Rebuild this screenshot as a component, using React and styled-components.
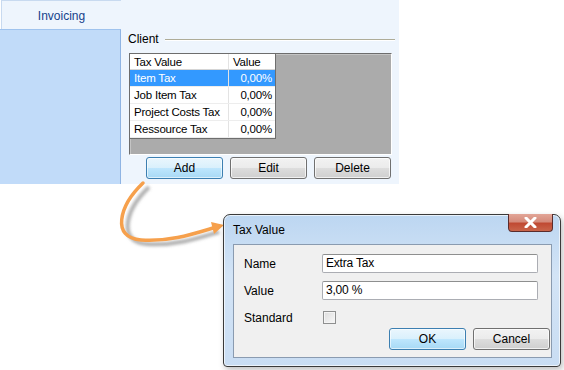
import React from "react";
import styled, { createGlobalStyle } from "styled-components";

const GlobalStyle = createGlobalStyle`
  body {
    margin: 0;
    background: #ffffff;
    font-family: "Liberation Sans", Arial, sans-serif;
    font-size: 11px;
    color: #000;
  }
`;

const taxes = [
  { name: "Item Tax", value: "0,00%" },
  { name: "Job Item Tax", value: "0,00%" },
  { name: "Project Costs Tax", value: "0,00%" },
  { name: "Ressource Tax", value: "0,00%" },
];

const Stage = styled.div`
  position: relative;
  width: 564px;
  height: 370px;
  overflow: hidden;
`;

const Panel = styled.div`
  display: grid;
  grid-template-columns: 121px 278px;
  width: 399px;
  height: 184px;
`;

const SideBar = styled.div`
  display: flex;
  flex-direction: column;
`;

const Tab = styled.div`
  height: 29px;
  box-sizing: border-box;
  display: flex;
  align-items: center;
  justify-content: center;
  padding-top: 2px;
  margin-left: 1px;
  background: #eef5fd;
  border-top: 1px solid #c8daf0;
  border-left: 1px solid #c8daf0;
  color: #15428b;
  font-size: 12px;
`;

const SideFill = styled.div`
  flex: 1;
  background: #c1dbf9;
  border-top: 1px solid #9fc3ee;
  border-right: 1px solid #8fb4e3;
`;

const Content = styled.div`
  background: #eef5fd;
  padding: 32px 7px 0 8px;
  display: flex;
  flex-direction: column;
`;

const Legend = styled.div`
  display: flex;
  align-items: center;
  gap: 6px;
  height: 14px;
  margin-left: -1px;
  margin-right: -3px;
  font-size: 12px;
`;

const Rule = styled.div`
  flex: 1;
  height: 1px;
  background: #aeac98;
  box-shadow: 0 1px 0 #ffffff;
`;

const ListBox = styled.div`
  margin-top: 7px;
  height: 102px;
  box-sizing: border-box;
  background: #ababab;
  border: 1px solid;
  border-color: #6d6d6d #ffffff #ffffff #6d6d6d;
  box-shadow: inset 1px 1px 0 #c4c4c4;
`;

const Table = styled.div`
  width: 146px;
  background: #ffffff;
  border-right: 1px solid #6e6e6e;
  border-bottom: 1px solid #6e6e6e;
  box-sizing: border-box;
`;

const Row = styled.div`
  display: grid;
  grid-template-columns: 99px 1fr;
  height: ${(p) => (p.$head ? 16 : 17)}px;
  box-sizing: border-box;
  border-bottom: 1px solid ${(p) => (p.$head ? "#d5d5d5" : "#ededed")};
  background: ${(p) => (p.$selected ? "#3399ff" : "#ffffff")};
  color: ${(p) => (p.$selected ? "#ffffff" : "#000000")};
  font-size: 11.5px;
  letter-spacing: -0.2px;
  line-height: 16px;
`;

const Cell = styled.div`
  padding: 0 3px 0 4px;
  text-align: ${(p) => (p.$right ? "right" : "left")};
  border-right: ${(p) => (p.$last ? "none" : "1px solid #e3e3e3")};
  white-space: nowrap;
  overflow: hidden;
`;

const ButtonRow = styled.div`
  display: flex;
  justify-content: flex-end;
  gap: 7px;
  margin-top: 2px;
  padding-right: 1px;
`;

const Button = styled.button`
  width: ${(p) => p.$w || 77}px;
  height: 22px;
  box-sizing: border-box;
  padding: 0;
  font-family: "Liberation Sans", Arial, sans-serif;
  font-size: 12px;
  color: #000;
  border-radius: 3px;
  border: 1px solid ${(p) => (p.$focus ? "#3c7fb1" : "#707070")};
  background: ${(p) =>
    p.$focus
      ? "linear-gradient(#eaf6fd 0%, #d9f0fc 50%, #bee6fd 51%, #a7d9f5 100%)"
      : "linear-gradient(#f2f2f2 0%, #ebebeb 50%, #dddddd 51%, #cfcfcf 100%)"};
  box-shadow: inset 0 0 0 1px
    ${(p) => (p.$focus ? "rgba(255,255,255,0.6)" : "rgba(255,255,255,0.7)")};
`;

const Arrow = styled.svg`
  position: absolute;
  left: 100px;
  top: 175px;
  overflow: visible;
`;

const Window = styled.div`
  position: absolute;
  left: 223px;
  top: 214px;
  width: 338px;
  height: 153px;
  box-sizing: border-box;
  border: 1px solid #3a3a3a;
  border-radius: 7px 7px 4px 4px;
  background: linear-gradient(180deg, #bcd6f1 0%, #d3e4f6 40%, #c9ddf3 100%);
  box-shadow: inset 0 0 0 1px rgba(255, 255, 255, 0.65),
    2px 3px 6px rgba(0, 0, 0, 0.25);
  display: flex;
  flex-direction: column;
  padding: 0 8px 8px 9px;
`;

const TitleBar = styled.div`
  display: flex;
  justify-content: space-between;
  align-items: flex-start;
  height: 29px;
`;

const Title = styled.div`
  font-family: "Liberation Sans", Arial, sans-serif;
  font-size: 12px;
  padding-top: 8px;
  color: #000;
`;

const Close = styled.div`
  width: 45px;
  height: 18px;
  margin-right: -1px;
  margin-top: -1px;
  box-sizing: border-box;
  border: 1px solid #5a2c2c;
  border-top: none;
  border-radius: 0 0 4px 4px;
  background: linear-gradient(#e2a597 0%, #d58b7b 45%, #c04a33 55%, #c9654b 100%);
  display: flex;
  align-items: center;
  justify-content: center;
`;

const ClientArea = styled.div`
  flex: 1;
  background: #f0f0f0;
  border: 1px solid #8a9bb0;
  padding: 9px 13px 0 10px;
  display: flex;
  flex-direction: column;
`;

const FieldRow = styled.div`
  display: grid;
  grid-template-columns: 78px 1fr;
  align-items: center;
  height: 19px;
  margin-bottom: ${(p) => p.$gap ?? 8}px;
`;

const Label = styled.label`
  font-size: 12px;
`;

const Input = styled.div`
  height: 19px;
  box-sizing: border-box;
  border: 1px solid #abadb3;
  border-top-color: #8e8f8f;
  border-radius: 2px;
  background: #ffffff;
  padding: 0 3px;
  font-size: 12px;
  letter-spacing: -0.2px;
  line-height: 17px;
`;

const Check = styled.div`
  width: 13px;
  height: 13px;
  margin-left: 1px;
  box-sizing: border-box;
  border: 1px solid #8e8f8f;
  background: linear-gradient(135deg, #dcdcdc, #f8f8f8);
  box-shadow: inset 0 0 0 1px #f4f4f4;
`;

const DialogButtons = styled.div`
  display: flex;
  justify-content: flex-end;
  gap: 7px;
  margin-top: 1px;
  margin-right: -12px;
`;

export default function App() {
  return (
    <Stage>
      <GlobalStyle />
      <Panel>
        <SideBar>
          <Tab>Invoicing</Tab>
          <SideFill />
        </SideBar>
        <Content>
          <Legend>
            Client
            <Rule />
          </Legend>
          <ListBox>
            <Table>
              <Row $head>
                <Cell>Tax Value</Cell>
                <Cell $last>Value</Cell>
              </Row>
              {taxes.map((t, i) => (
                <Row key={t.name} $selected={i === 0}>
                  <Cell>{t.name}</Cell>
                  <Cell $right $last>
                    {t.value}
                  </Cell>
                </Row>
              ))}
            </Table>
          </ListBox>
          <ButtonRow>
            <Button $focus>Add</Button>
            <Button>Edit</Button>
            <Button>Delete</Button>
          </ButtonRow>
        </Content>
      </Panel>

      <Arrow width="140" height="80" viewBox="0 0 140 80">
        <defs>
          <filter id="blur" x="-20%" y="-20%" width="140%" height="140%">
            <feGaussianBlur stdDeviation="1.6" />
          </filter>
        </defs>
        <path
          d="M46,9 C22,32 14,64 44,66 C72,68 96,60 116,54"
          fill="none"
          stroke="#7a7a7a"
          strokeOpacity="0.6"
          strokeWidth="4"
          filter="url(#blur)"
          transform="translate(3,3)"
        />
        <path
          d="M43,8 C19,31 11,63 41,65 C69,67 93,59 113,53"
          fill="none"
          stroke="#f6a04c"
          strokeWidth="3.5"
          strokeLinecap="round"
        />
        <path d="M111,47 L124,50 L114,59 Z" fill="#f6a04c" />
      </Arrow>

      <Window>
        <TitleBar>
          <Title>Tax Value</Title>
          <Close>
            <svg width="13" height="11" viewBox="0 0 13 11">
              <path
                d="M2,1 L11,10 M11,1 L2,10"
                stroke="#ffffff"
                strokeWidth="3"
                strokeLinecap="round"
              />
            </svg>
          </Close>
        </TitleBar>
        <ClientArea>
          <FieldRow>
            <Label>Name</Label>
            <Input>Extra Tax</Input>
          </FieldRow>
          <FieldRow>
            <Label>Value</Label>
            <Input>3,00 %</Input>
          </FieldRow>
          <FieldRow $gap={0}>
            <Label>Standard</Label>
            <Check />
          </FieldRow>
          <DialogButtons>
            <Button $focus $w={77}>
              OK
            </Button>
            <Button $w={77}>Cancel</Button>
          </DialogButtons>
        </ClientArea>
      </Window>
    </Stage>
  );
}
